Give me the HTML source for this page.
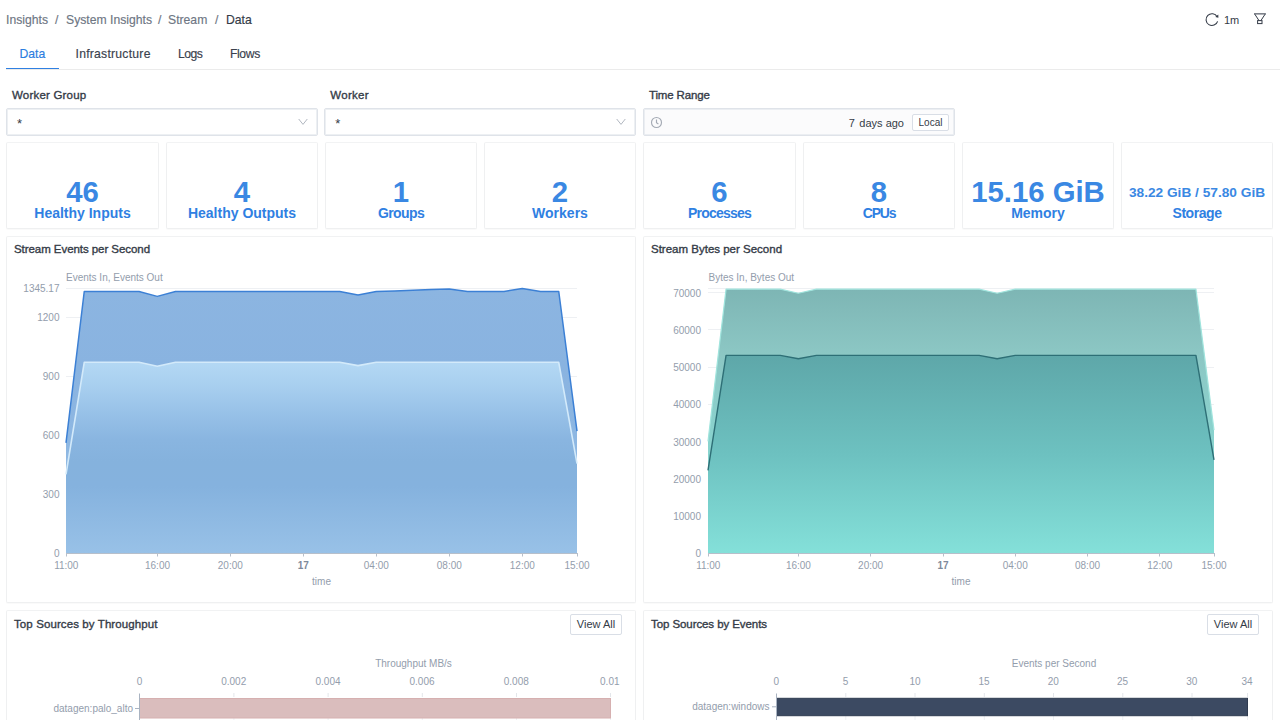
<!DOCTYPE html>
<html lang="en">
<head>
<meta charset="utf-8">
<title>Insights - Stream - Data</title>
<style>
*{box-sizing:border-box;margin:0;padding:0}
html,body{width:1280px;height:720px;overflow:hidden;background:#fff}
body{position:relative;font-family:"Liberation Sans",Arial,sans-serif;color:#343b47;font-size:13px}
.abs{position:absolute;white-space:nowrap;line-height:1}
.crumb{top:13.5px;font-size:12.2px;color:#6e7683;-webkit-text-stroke:.15px #6e7683}
.crumb.cur{color:#343b47;-webkit-text-stroke:.15px #343b47}
.tab{top:47.5px;font-size:12.2px;color:#3a414d;-webkit-text-stroke:.15px #3a414d}
.tab.on{color:#2b7de0;-webkit-text-stroke:.15px #2b7de0}
.tabline{left:6px;top:68.7px;width:1274px;height:1px;background:#ebebeb}
.tabink{left:6px;top:67.6px;width:53px;height:1.9px;background:#2f80e2}
.flabel{top:89.8px;font-size:11.5px;color:#343b47;-webkit-text-stroke:.35px #343b47}
.sel{top:108.4px;height:27.2px;border:1px solid #dfe3e9;border-radius:2px;background:#fff;box-shadow:inset 0 0 0 1px rgba(223,227,233,.55)}
.sel .v{left:10px;top:7.6px;font-size:13px;color:#343b47}
.card{top:142px;height:87px;border:1px solid #eff0f1;border-top-color:#f2f3f4;border-radius:2px;background:#fff;text-align:center;box-shadow:0 1px 1px rgba(0,0,0,.025)}
.card .n{left:0;right:0;top:33.6px;font-size:29.3px;font-weight:bold;color:#3a88e3}
.card .n.sm{top:42.6px;font-size:13.7px}
.card .l{left:0;right:0;top:63px;font-size:14px;font-weight:bold;color:#2f80e2}
.panel{border:1px solid #eff0f1;border-top-color:#f1f2f3;border-radius:2px;background:#fff;box-shadow:0 1px 1px rgba(0,0,0,.025)}
.ptitle{font-size:11.5px;color:#343b47;-webkit-text-stroke:.35px #343b47}
.btn{height:21px;border:1px solid #d9dee6;border-radius:2px;background:#fff;font-size:11px;color:#343b47;text-align:center;line-height:19.8px}
svg text{font-family:"Liberation Sans",Arial,sans-serif}
</style>
</head>
<body>
<!-- breadcrumb -->
<div class="abs crumb" style="left:6px">Insights</div>
<div class="abs crumb" style="left:55px">/</div>
<div class="abs crumb" style="left:66px">System Insights</div>
<div class="abs crumb" style="left:158px">/</div>
<div class="abs crumb" style="left:168px">Stream</div>
<div class="abs crumb" style="left:215px">/</div>
<div class="abs crumb cur" style="left:226px">Data</div>

<!-- top-right tools -->
<svg class="abs" style="left:1200px;top:8px" width="76" height="24" viewBox="1200 8 76 24" fill="none">
  <path d="M1217.1 16.7 A5.9 5.9 0 1 0 1217.6 21.3" stroke="#343b47" stroke-width="1.1"/>
  <path d="M1215.3 16.9 L1218.4 17.7 L1218.3 14.6 Z" fill="#343b47"/>
  <text x="1224" y="23.6" font-size="11" fill="#343b47">1m</text>
  <path d="M1254 13.85 H1265.9" stroke="#5d636e" stroke-width="1.3"/>
  <path d="M1254.8 14.2 L1259 20.6 M1265.1 14.2 L1260.9 20.6" stroke="#343b47" stroke-width="1"/>
  <rect x="1257.6" y="20.6" width="4.4" height="3" stroke="#343b47" stroke-width="1"/>
</svg>

<!-- tabs -->
<div class="abs tab on" style="left:19.5px">Data</div>
<div class="abs tab" style="left:75.5px;letter-spacing:.24px">Infrastructure</div>
<div class="abs tab" style="left:178px;letter-spacing:-.5px">Logs</div>
<div class="abs tab" style="left:230px;letter-spacing:-.4px">Flows</div>
<div class="abs tabline"></div>
<div class="abs tabink"></div>

<!-- filters -->
<div class="abs flabel" style="left:12px;letter-spacing:.2px">Worker Group</div>
<div class="abs flabel" style="left:330.3px;letter-spacing:.27px">Worker</div>
<div class="abs flabel" style="left:649px;letter-spacing:-.15px">Time Range</div>

<div class="abs sel" style="left:6px;width:312px"><span class="abs v">*</span>
  <svg class="abs" style="right:9px;top:9px" width="10" height="8" viewBox="0 0 10 8" fill="none"><path d="M0.7 1 L5 6.4 L9.3 1" stroke="#b1b7c0" stroke-width="1"/></svg>
</div>
<div class="abs sel" style="left:324.3px;width:312px"><span class="abs v">*</span>
  <svg class="abs" style="right:9px;top:9px" width="10" height="8" viewBox="0 0 10 8" fill="none"><path d="M0.7 1 L5 6.4 L9.3 1" stroke="#b1b7c0" stroke-width="1"/></svg>
</div>
<div class="abs sel" style="left:643px;width:312px;background:#fbfbfc">
  <svg class="abs" style="left:5.5px;top:6.2px" width="13" height="13" viewBox="0 0 13 13" fill="none"><circle cx="6.5" cy="6.5" r="5" stroke="#a4aab4" stroke-width="1.15"/><path d="M6.5 3.6 V6.7 L8.4 8" stroke="#a4aab4" stroke-width="1.15"/></svg>
  <span class="abs" style="right:50px;top:8.5px;font-size:11px;color:#343b47">7<span style="margin-left:4.5px">days ago</span></span>
  <div class="abs btn" style="left:268px;top:5px;width:37px;height:17px;line-height:15px;font-size:10px">Local</div>
</div>

<!-- stat cards -->
<div class="abs card" style="left:6px;width:153px"><div class="abs n">46</div><div class="abs l">Healthy Inputs</div></div>
<div class="abs card" style="left:166px;width:152px"><div class="abs n">4</div><div class="abs l">Healthy Outputs</div></div>
<div class="abs card" style="left:325px;width:152px"><div class="abs n">1</div><div class="abs l" style="letter-spacing:-.6px">Groups</div></div>
<div class="abs card" style="left:484px;width:152px"><div class="abs n">2</div><div class="abs l">Workers</div></div>
<div class="abs card" style="left:643px;width:153px"><div class="abs n">6</div><div class="abs l" style="letter-spacing:-.78px">Processes</div></div>
<div class="abs card" style="left:803px;width:152px"><div class="abs n">8</div><div class="abs l" style="letter-spacing:-1.2px">CPUs</div></div>
<div class="abs card" style="left:962px;width:152px"><div class="abs n">15.16 GiB</div><div class="abs l">Memory</div></div>
<div class="abs card" style="left:1121px;width:152px"><div class="abs n sm">38.22 GiB / 57.80 GiB</div><div class="abs l" style="letter-spacing:-.45px">Storage</div></div>

<!-- chart panels -->
<div class="abs panel" style="left:6px;top:236px;width:630px;height:367px"></div>
<div class="abs panel" style="left:643px;top:236px;width:630px;height:367px"></div>
<div class="abs panel" style="left:6px;top:610px;width:630px;height:130px"></div>
<div class="abs panel" style="left:643px;top:610px;width:630px;height:130px"></div>
<div class="abs ptitle" style="left:14px;top:244.4px;letter-spacing:-.06px">Stream Events per Second</div>
<div class="abs ptitle" style="left:651px;top:244.4px">Stream Bytes per Second</div>
<div class="abs ptitle" style="left:14px;top:619.3px;letter-spacing:.1px">Top Sources by Throughput</div>
<div class="abs ptitle" style="left:651px;top:619.3px;letter-spacing:-.08px">Top Sources by Events</div>
<div class="abs btn" style="left:570px;top:614px;width:52px">View All</div>
<div class="abs btn" style="left:1207px;top:614px;width:52px">View All</div>

<svg class="abs" style="left:0;top:0" width="1280" height="720" viewBox="0 0 1280 720">
<defs>
  <linearGradient id="gEvIn" x1="0" y1="288" x2="0" y2="553" gradientUnits="userSpaceOnUse">
    <stop offset="0" stop-color="#8cb5e1"/><stop offset=".3" stop-color="#89b3e0"/><stop offset="1" stop-color="#95bee6"/>
  </linearGradient>
  <linearGradient id="gEvOut" x1="0" y1="362" x2="0" y2="553" gradientUnits="userSpaceOnUse">
    <stop offset="0" stop-color="#b4d8f4"/><stop offset=".125" stop-color="#a8cfef"/><stop offset=".28" stop-color="#96c0e7"/>
    <stop offset=".41" stop-color="#89b5e0"/><stop offset=".52" stop-color="#85b2dd"/><stop offset=".65" stop-color="#85b2de"/><stop offset="1" stop-color="#98c1e7"/>
  </linearGradient>
  <linearGradient id="gByIn" x1="0" y1="288" x2="0" y2="553" gradientUnits="userSpaceOnUse">
    <stop offset="0" stop-color="#7db5b4"/><stop offset=".25" stop-color="#8cc7c4"/><stop offset="1" stop-color="#86e2db"/>
  </linearGradient>
  <linearGradient id="gByOut" x1="0" y1="355" x2="0" y2="553" gradientUnits="userSpaceOnUse">
    <stop offset="0" stop-color="#5ea7a9"/><stop offset=".5" stop-color="#6dc1c0"/><stop offset="1" stop-color="#84e0d9"/>
  </linearGradient>
</defs>

<!-- ===== Stream Events per Second ===== -->
<g font-size="10" fill="#939dac">
  <g stroke="#eef0f3" stroke-width="1">
    <path d="M66 288.5H577M66 317.5H577M66 376.5H577M66 435.5H577M66 494.5H577"/>
  </g>
  <text x="66" y="280.5">Events In, Events Out</text>
  <g text-anchor="end">
    <text x="59.5" y="292">1345.17</text><text x="59.5" y="320.5">1200</text><text x="59.5" y="379.5">900</text>
    <text x="59.5" y="438.5">600</text><text x="59.5" y="497.5">300</text><text x="59.5" y="556.5">0</text>
  </g>
  <polygon points="66.00,442.89 84.25,291.48 102.50,291.48 120.75,291.48 139.00,291.48 157.25,296.40 175.50,291.48 193.75,291.48 212.00,291.48 230.25,291.48 248.50,291.48 266.75,291.48 285.00,291.48 303.25,291.48 321.50,291.48 339.75,291.48 358.00,295.02 376.25,291.48 394.50,290.89 412.75,290.20 431.00,289.61 449.25,288.93 467.50,291.48 485.75,291.48 504.00,291.48 522.25,288.50 540.50,291.48 558.75,291.48 577.00,431.09 577.00,553.00 66.00,553.00" fill="url(#gEvIn)"/>
  <polygon points="66.00,474.35 84.25,362.27 102.50,362.27 120.75,362.27 139.00,362.27 157.25,366.20 175.50,362.27 193.75,362.27 212.00,362.27 230.25,362.27 248.50,362.27 266.75,362.27 285.00,362.27 303.25,362.27 321.50,362.27 339.75,362.27 358.00,365.61 376.25,362.27 394.50,362.27 412.75,362.27 431.00,362.27 449.25,362.27 467.50,362.27 485.75,362.27 504.00,362.27 522.25,362.27 540.50,362.27 558.75,362.27 577.00,463.53 577.00,553.00 66.00,553.00" fill="url(#gEvOut)"/>
  <polyline points="66.00,442.89 84.25,291.48 102.50,291.48 120.75,291.48 139.00,291.48 157.25,296.40 175.50,291.48 193.75,291.48 212.00,291.48 230.25,291.48 248.50,291.48 266.75,291.48 285.00,291.48 303.25,291.48 321.50,291.48 339.75,291.48 358.00,295.02 376.25,291.48 394.50,290.89 412.75,290.20 431.00,289.61 449.25,288.93 467.50,291.48 485.75,291.48 504.00,291.48 522.25,288.50 540.50,291.48 558.75,291.48 577.00,431.09" fill="none" stroke="#3c80d5" stroke-width="1.5" stroke-linejoin="round"/>
  <polyline points="66.00,474.35 84.25,362.27 102.50,362.27 120.75,362.27 139.00,362.27 157.25,366.20 175.50,362.27 193.75,362.27 212.00,362.27 230.25,362.27 248.50,362.27 266.75,362.27 285.00,362.27 303.25,362.27 321.50,362.27 339.75,362.27 358.00,365.61 376.25,362.27 394.50,362.27 412.75,362.27 431.00,362.27 449.25,362.27 467.50,362.27 485.75,362.27 504.00,362.27 522.25,362.27 540.50,362.27 558.75,362.27 577.00,463.53" fill="none" stroke="#d3eafa" stroke-width="1.6" stroke-linejoin="round"/>
  <path d="M66 553.5H577.5" stroke="#b7bfca" stroke-width="1"/>
  <path d="M66.5 553v3.5M157.5 553v3.5M230.5 553v3.5M303.5 553v3.5M376.5 553v3.5M449.5 553v3.5M522.5 553v3.5M577.5 553v3.5" stroke="#b7bfca" stroke-width="1"/>
  <g text-anchor="middle">
    <text x="66.3" y="568.5">11:00</text><text x="157.5" y="568.5">16:00</text><text x="230.3" y="568.5">20:00</text>
    <text x="303.3" y="568.5" font-weight="bold" fill="#7f8a9b">17</text><text x="376.3" y="568.5">04:00</text><text x="449.3" y="568.5">08:00</text>
    <text x="522.3" y="568.5">12:00</text><text x="577" y="568.5">15:00</text>
    <text x="321.5" y="584.6">time</text>
  </g>
</g>

<!-- ===== Stream Bytes per Second ===== -->
<g font-size="10" fill="#939dac">
  <g stroke="#eef0f3" stroke-width="1">
    <path d="M708 288.5H1214M708 292.5H1214M708 329.5H1214M708 367.5H1214M708 404.5H1214M708 441.5H1214M708 478.5H1214M708 516.5H1214"/>
  </g>
  <text x="708.5" y="280.5">Bytes In, Bytes Out</text>
  <g text-anchor="end">
    <text x="701" y="296.5">70000</text><text x="701" y="333.5">60000</text><text x="701" y="371">50000</text>
    <text x="701" y="408">40000</text><text x="701" y="445.5">30000</text><text x="701" y="482.5">20000</text>
    <text x="701" y="520">10000</text><text x="701" y="556.5">0</text>
  </g>
  <polygon points="708.00,441.36 726.07,289.15 744.14,289.15 762.21,289.15 780.29,289.15 798.36,293.24 816.43,289.15 834.50,289.15 852.57,289.15 870.64,289.15 888.71,289.15 906.79,289.15 924.86,289.15 942.93,289.15 961.00,289.15 979.07,289.15 997.14,293.24 1015.21,289.15 1033.29,289.15 1051.36,289.15 1069.43,289.15 1087.50,289.15 1105.57,289.15 1123.64,289.15 1141.71,289.15 1159.79,289.15 1177.86,289.15 1195.93,289.15 1214.00,430.19 1214.00,553.00 708.00,553.00" fill="url(#gByIn)"/>
  <polygon points="708.00,470.38 726.07,355.39 744.14,355.39 762.21,355.39 780.29,355.39 798.36,358.74 816.43,355.39 834.50,355.39 852.57,355.39 870.64,355.39 888.71,355.39 906.79,355.39 924.86,355.39 942.93,355.39 961.00,355.39 979.07,355.39 997.14,358.74 1015.21,355.39 1033.29,355.39 1051.36,355.39 1069.43,355.39 1087.50,355.39 1105.57,355.39 1123.64,355.39 1141.71,355.39 1159.79,355.39 1177.86,355.39 1195.93,355.39 1214.00,459.96 1214.00,553.00 708.00,553.00" fill="url(#gByOut)"/>
  <polyline points="708.00,441.36 726.07,289.15 744.14,289.15 762.21,289.15 780.29,289.15 798.36,293.24 816.43,289.15 834.50,289.15 852.57,289.15 870.64,289.15 888.71,289.15 906.79,289.15 924.86,289.15 942.93,289.15 961.00,289.15 979.07,289.15 997.14,293.24 1015.21,289.15 1033.29,289.15 1051.36,289.15 1069.43,289.15 1087.50,289.15 1105.57,289.15 1123.64,289.15 1141.71,289.15 1159.79,289.15 1177.86,289.15 1195.93,289.15 1214.00,430.19" fill="none" stroke="#a0e4dd" stroke-width="1.2" stroke-linejoin="round"/>
  <polyline points="708.00,470.38 726.07,355.39 744.14,355.39 762.21,355.39 780.29,355.39 798.36,358.74 816.43,355.39 834.50,355.39 852.57,355.39 870.64,355.39 888.71,355.39 906.79,355.39 924.86,355.39 942.93,355.39 961.00,355.39 979.07,355.39 997.14,358.74 1015.21,355.39 1033.29,355.39 1051.36,355.39 1069.43,355.39 1087.50,355.39 1105.57,355.39 1123.64,355.39 1141.71,355.39 1159.79,355.39 1177.86,355.39 1195.93,355.39 1214.00,459.96" fill="none" stroke="#2e6f76" stroke-width="1.4" stroke-linejoin="round"/>
  <path d="M708 553.5H1214.5" stroke="#b7bfca" stroke-width="1"/>
  <path d="M708.5 553v3.5M798.5 553v3.5M870.5 553v3.5M943.5 553v3.5M1015.5 553v3.5M1087.5 553v3.5M1159.5 553v3.5M1214.5 553v3.5" stroke="#b7bfca" stroke-width="1"/>
  <g text-anchor="middle">
    <text x="708.3" y="568.5">11:00</text><text x="798.4" y="568.5">16:00</text><text x="870.6" y="568.5">20:00</text>
    <text x="943" y="568.5" font-weight="bold" fill="#7f8a9b">17</text><text x="1015.2" y="568.5">04:00</text><text x="1087.5" y="568.5">08:00</text>
    <text x="1159.8" y="568.5">12:00</text><text x="1214" y="568.5">15:00</text>
    <text x="961" y="584.6">time</text>
  </g>
</g>

<!-- ===== Top Sources by Throughput ===== -->
<g font-size="10" fill="#939dac">
  <g text-anchor="middle">
    <text x="413.5" y="666.5">Throughput MB/s</text>
    <text x="139.5" y="685">0</text><text x="233.7" y="685">0.002</text><text x="328" y="685">0.004</text>
    <text x="422" y="685">0.006</text><text x="516.3" y="685">0.008</text><text x="609.8" y="685">0.01</text>
  </g>
  <path d="M233.9 693v4M328.1 693v4M422.3 693v4M516.5 693v4M610.5 693v4" stroke="#e3e6ea" stroke-width="1"/>
  <path d="M233.9 718v2M328.1 718v2M422.3 718v2M516.5 718v2M610.5 718v2" stroke="#eef0f3" stroke-width="1"/>
  <rect x="139.5" y="698.5" width="471" height="19.5" fill="#dabdbd" stroke="#d6b0b0" stroke-width="1"/>
  <path d="M139.5 693.5V720" stroke="#a9b3c1" stroke-width="1"/>
  <path d="M135 708.5h4.5" stroke="#a9b3c1" stroke-width="1"/>
  <text x="133" y="712" text-anchor="end">datagen:palo_alto</text>
</g>

<!-- ===== Top Sources by Events ===== -->
<g font-size="10" fill="#939dac">
  <g text-anchor="middle">
    <text x="1054" y="666.5">Events per Second</text>
    <text x="776.3" y="685">0</text><text x="845.5" y="685">5</text><text x="915" y="685">10</text>
    <text x="984" y="685">15</text><text x="1053.3" y="685">20</text><text x="1122.5" y="685">25</text>
    <text x="1191.8" y="685">30</text><text x="1247" y="685">34</text>
  </g>
  <path d="M845.8 693v4M915 693v4M984.3 693v4M1053.5 693v4M1122.8 693v4M1192 693v4M1247.5 693v4" stroke="#e3e6ea" stroke-width="1"/>
  <path d="M845.8 716v4M915 716v4M984.3 716v4M1053.5 716v4M1122.8 716v4M1192 716v4M1247.5 716v4" stroke="#eef0f3" stroke-width="1"/>
  <rect x="776.5" y="698.3" width="471" height="17.4" fill="#3c4a62" stroke="#2f3b50" stroke-width="1"/>
  <path d="M776.5 693.5V720" stroke="#a9b3c1" stroke-width="1"/>
  <path d="M772 706.8h4.5" stroke="#a9b3c1" stroke-width="1"/>
  <text x="769.5" y="710.3" text-anchor="end">datagen:windows</text>
</g>
</svg>

</body>
</html>
